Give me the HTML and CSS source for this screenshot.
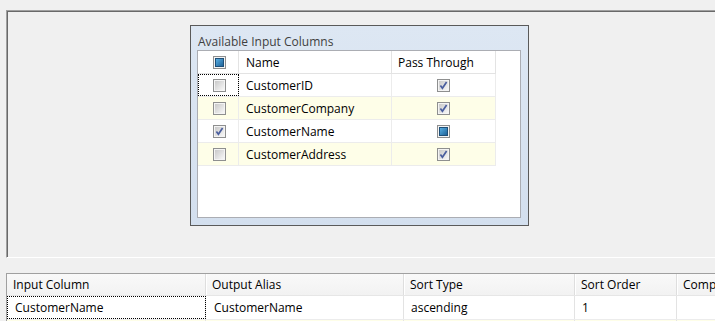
FILE: index.html
```html
<!DOCTYPE html>
<html>
<head>
<meta charset="utf-8">
<link rel="stylesheet" href="styles.css">
</head>
<body>
<svg class="defs" width="0" height="0">
  <defs>
    <linearGradient id="gbox" x1="0" y1="0" x2="1" y2="1">
      <stop offset="0" stop-color="#c9c9c9"/>
      <stop offset="1" stop-color="#f7f7f7"/>
    </linearGradient>
    <linearGradient id="gind" x1="0" y1="0" x2="1" y2="1">
      <stop offset="0" stop-color="#5cb4e8"/>
      <stop offset="1" stop-color="#1b5e94"/>
    </linearGradient>
    <symbol id="cb-off" viewBox="0 0 13 13">
      <rect x="0.5" y="0.5" width="12" height="12" fill="#f4f4f4" stroke="#8e8f8f"/>
      <rect x="2" y="2" width="9" height="9" fill="url(#gbox)"/>
    </symbol>
    <symbol id="cb-on" viewBox="0 0 13 13">
      <rect x="0.5" y="0.5" width="12" height="12" fill="#f4f4f4" stroke="#8e8f8f"/>
      <rect x="2" y="2" width="9" height="9" fill="url(#gbox)"/>
      <path d="M3.4 6.6 L5.4 9.2 L9.6 3" fill="none" stroke="#4a5e9e" stroke-width="1.7"/>
    </symbol>
    <symbol id="cb-ind" viewBox="0 0 13 13">
      <rect x="0.5" y="0.5" width="12" height="12" fill="#f4f4f4" stroke="#8e8f8f"/>
      <rect x="2.5" y="2.5" width="8" height="8" fill="url(#gind)" stroke="#1e4f78"/>
    </symbol>
  </defs>
</svg>

<div class="outer">
  <div class="dialog">
    <div class="dlg-title">Available Input Columns</div>
    <div class="listbox">
      <div class="lrow lhead">
        <div class="c1"><svg class="cb"><use href="#cb-ind"/></svg></div>
        <div class="c2">Name</div>
        <div class="c3">Pass Through</div>
      </div>
      <div class="lrow">
        <div class="c1 focus"><svg class="cb"><use href="#cb-off"/></svg></div>
        <div class="c2">CustomerID</div>
        <div class="c3 center"><svg class="cb"><use href="#cb-on"/></svg></div>
      </div>
      <div class="lrow alt">
        <div class="c1"><svg class="cb"><use href="#cb-off"/></svg></div>
        <div class="c2">CustomerCompany</div>
        <div class="c3 center"><svg class="cb"><use href="#cb-on"/></svg></div>
      </div>
      <div class="lrow">
        <div class="c1"><svg class="cb"><use href="#cb-on"/></svg></div>
        <div class="c2">CustomerName</div>
        <div class="c3 center"><svg class="cb"><use href="#cb-ind"/></svg></div>
      </div>
      <div class="lrow alt">
        <div class="c1"><svg class="cb"><use href="#cb-off"/></svg></div>
        <div class="c2">CustomerAddress</div>
        <div class="c3 center"><svg class="cb"><use href="#cb-on"/></svg></div>
      </div>
    </div>
  </div>
</div>

<div class="grid">
  <div class="grow ghead">
    <div class="g1">Input Column</div>
    <div class="g2">Output Alias</div>
    <div class="g3">Sort Type</div>
    <div class="g4">Sort Order</div>
    <div class="g5">Comparison Flags</div>
  </div>
  <div class="grow gdata">
    <div class="g1 focus">CustomerName</div>
    <div class="g2">CustomerName</div>
    <div class="g3">ascending</div>
    <div class="g4">1</div>
    <div class="g5"></div>
  </div>
  <div class="grow gnext">
    <div class="g1"></div>
    <div class="g2"></div>
    <div class="g3"></div>
    <div class="g4"></div>
    <div class="g5"></div>
  </div>
</div>
</body>
</html>
```

FILE: styles.css
```css
* { box-sizing: border-box; }

html, body {
  margin: 0;
  padding: 0;
  width: 715px;
  height: 321px;
  overflow: hidden;
  background: #f0f0f0;
  font-family: "Open Sans", "Noto Sans", sans-serif;
  font-size: 12px;
  color: #000;
}

.defs { position: absolute; width: 0; height: 0; }

.outer {
  margin: 10px 0 0 6px;
  width: 760px;
  height: 248px;
  border-top: 1px solid #a0a0a0;
  border-left: 1px solid #a0a0a0;
  border-bottom: 1px solid #ffffff;
  box-shadow: inset 1px 1px 0 #696969;
  padding: 14px 0 0 183px;
}

.dialog {
  width: 339px;
  height: 201px;
  border: 1px solid #5a5a5a;
  background: linear-gradient(#dde7f3, #d3dfee);
  padding: 0 7px 7px 6px;
  display: flex;
  flex-direction: column;
}

.dlg-title {
  height: 24px;
  padding-top: 8px;
  line-height: 16px;
  color: #3f3f3f;
  padding-left: 1px;
}

.listbox {
  flex: 1;
  background: #fff;
  border: 1px solid #abadb3;
  display: flex;
  flex-direction: column;
}

.lrow {
  display: flex;
  flex-shrink: 0;
  width: 298px;
  height: 23px;
  border-bottom: 1px solid #ececec;
}

.lrow.lhead { border-bottom-color: #e3e3e3; }
.lrow.alt { background: #fefee8; }

.lrow > div {
  display: flex;
  flex-shrink: 0;
  align-items: center;
  border-right: 1px solid #ececec;
  white-space: nowrap;
}

.lhead > div { border-right-color: #e3e3e3; }

.c1 { width: 41px; justify-content: center; padding-left: 2px; }
.c2 { width: 153px; padding-left: 7px; }
.c3 { width: 104px; padding-left: 6px; }
.c3.center { justify-content: center; padding-left: 0; }

.focus { outline: 1px dotted #000; outline-offset: -1px; }

.cb { width: 13px; height: 13px; display: block; }

.grid {
  margin: 15px 0 0 6px;
  width: 900px;
  border-top: 1px solid #a0a0a0;
  border-left: 1px solid #a0a0a0;
}

.grow { display: flex; }

.grow > div {
  flex-shrink: 0;
  border-right: 1px solid #e3e3e3;
  white-space: nowrap;
  overflow: hidden;
  display: flex;
  align-items: center;
}

.ghead {
  height: 22px;
  background: linear-gradient(#f9f9f9, #f2f2f2);
  border-bottom: 1px solid #e6e6e6;
}
.ghead > div { padding-left: 6px; border-right-color: #dedede; box-shadow: 1px 0 0 #ffffff; }

.gdata { height: 24px; background: #fff; border-bottom: 1px solid #ececec; }
.gdata > div { padding-left: 8px; }
.gdata .g3, .gdata .g4 { padding-left: 7px; }

.gnext { height: 20px; background: #fefee8; }

.g1 { width: 199px; }
.g2 { width: 198px; }
.g3 { width: 171px; }
.g4 { width: 102px; }
.g5 { width: 200px; }
```
